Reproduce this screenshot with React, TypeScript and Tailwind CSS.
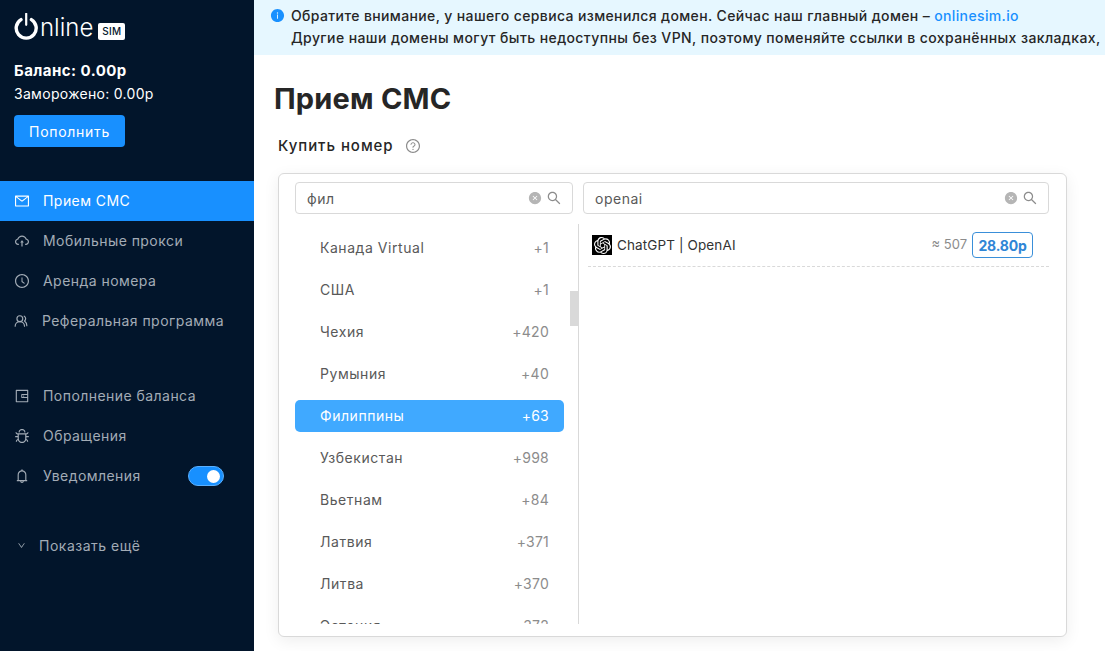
import React from "react";
import {
  AiOutlineMail,
  AiOutlineCloudUpload,
  AiOutlineClockCircle,
  AiOutlineWallet,
  AiOutlineBug,
  AiOutlineBell,
  AiOutlineDown,
  AiOutlineSearch,
  AiOutlineQuestionCircle,
  AiFillInfoCircle,
  AiFillCloseCircle,
} from "react-icons/ai";
import { SiOpenai } from "react-icons/si";
import { UsersRound } from "lucide-react";

const countries: [string, string][] = [
  ["Канада Virtual", "+1"],
  ["США", "+1"],
  ["Чехия", "+420"],
  ["Румыния", "+40"],
  ["Филиппины", "+63"],
  ["Узбекистан", "+998"],
  ["Вьетнам", "+84"],
  ["Латвия", "+371"],
  ["Литва", "+370"],
  ["Эстония", "+372"],
];

function NavItem({ icon, label, active, right }: { icon: React.ReactNode; label: string; active?: boolean; right?: React.ReactNode }) {
  return (
    <div className={`flex h-10 items-center pl-[14px] pr-[30px] text-[14px] tracking-[0.45px] whitespace-nowrap ${active ? "bg-[#1890ff] text-white" : "text-[#a3acb6]"}`}>
      <span className="flex w-[16px] justify-center text-[16px]">{icon}</span>
      <span className="mb-[2px] ml-[13px]">{label}</span>
      {right && <span className="ml-auto">{right}</span>}
    </div>
  );
}

function SearchBox({ value, className }: { value: string; className: string }) {
  return (
    <div className={`flex h-8 items-center rounded-[4px] border border-[#d9d9d9] pl-[11px] pr-[10px] text-[14px] tracking-[0.5px] text-[#595959] ${className}`}>
      <span className="flex-1">{value}</span>
      <AiFillCloseCircle className="text-[14px] text-[#b5b5b5]" />
      <AiOutlineSearch className="ml-[4px] text-[16px] text-[#8c8c8c]" />
    </div>
  );
}

export default function App() {
  return (
    <div className="flex h-[651px] w-[1105px] overflow-hidden bg-white font-['Inter','Liberation_Sans',sans-serif]">
      <aside className="flex w-[254px] shrink-0 flex-col bg-[#02152b]">
        <div className="flex h-[49px] items-end pl-[14px]">
          <svg width="27" height="28" viewBox="0 0 27 28" className="mb-[8px] shrink-0">
            <path d="M7 6.6a10 10 0 1 0 10.4 0" fill="none" stroke="#fff" strokeWidth="3.4" strokeLinecap="round" />
            <path d="M12.2 0.8v11" fill="none" stroke="#fff" strokeWidth="2.2" strokeLinecap="round" />
          </svg>
          <span className="mb-[6px] ml-[-1px] text-[24px] leading-[30px] font-light text-white">nline</span>
          <span className="mb-[9px] ml-[5px] flex h-[17px] w-[27px] items-center justify-center rounded-[2px] bg-white text-[10px] font-medium tracking-[0.3px] text-[#02152b]">SIM</span>
        </div>
        <div className="mt-[12px] pl-[14px] text-[15px] leading-5 font-bold tracking-[0.45px] text-white">Баланс: 0.00р</div>
        <div className="mt-[3px] pl-[14px] text-[14px] leading-5 tracking-[0.3px] text-white">Заморожено: 0.00р</div>
        <button className="mt-[11px] ml-[14px] h-8 w-[111px] rounded-[4px] bg-[#1890ff] text-[14px] tracking-[0.7px] text-white">Пополнить</button>
        <nav className="mt-[34px] flex flex-col">
          <NavItem active icon={<AiOutlineMail />} label="Прием СМС" />
          <NavItem icon={<AiOutlineCloudUpload />} label="Мобильные прокси" />
          <NavItem icon={<AiOutlineClockCircle />} label="Аренда номера" />
          <NavItem icon={<UsersRound size={14} />} label="Реферальная программа" />
          <div className="h-[35px]" />
          <NavItem icon={<AiOutlineWallet />} label="Пополнение баланса" />
          <NavItem icon={<AiOutlineBug />} label="Обращения" />
          <NavItem
            icon={<AiOutlineBell />}
            label="Уведомления"
            right={
              <span className="flex h-5 w-9 items-center justify-end rounded-full border border-[#5ab0ff] bg-[#1890ff] pr-[3px]">
                <span className="h-[13px] w-[13px] rounded-full bg-white" />
              </span>
            }
          />
          <div className="h-[30px]" />
          <div className="flex h-10 items-center pb-[2px] pl-[17px] text-[14px] tracking-[0.5px] text-[#a3acb6]">
            <AiOutlineDown className="text-[9px]" />
            <span className="ml-[13px]">Показать ещё</span>
          </div>
        </nav>
      </aside>

      <main className="flex min-w-0 flex-1 flex-col">
        <div className="h-[55px] overflow-hidden bg-[#e6f7ff] pt-[5px] pl-[16px] text-[14px] leading-[21px] font-medium tracking-[0.37px] whitespace-nowrap text-[#262626]">
          <div className="flex items-center">
            <AiFillInfoCircle className="shrink-0 text-[15px] text-[#1890ff]" />
            <span className="ml-[6px]">
              Обратите внимание, у нашего сервиса изменился домен. Сейчас наш главный домен – <span className="text-[#1890ff]">onlinesim.io</span>
            </span>
          </div>
          <div className="mt-[1px] pl-[21px] tracking-[0.4px]">Другие наши домены могут быть недоступны без VPN, поэтому поменяйте ссылки в сохранённых закладках,</div>
        </div>

        <h1 className="mt-[24px] ml-[20px] text-[29px] leading-[40px] font-bold tracking-[0.2px] text-[#262626]">Прием СМС</h1>
        <div className="mt-[15px] ml-[24px] flex items-center text-[15px] leading-[24px] font-medium tracking-[0.95px] text-[#262626]">
          Купить номер
          <AiOutlineQuestionCircle className="ml-[11px] text-[16px] text-[#8c8c8c]" />
        </div>

        <section className="relative mt-[15px] ml-[24px] flex h-[464px] w-[789px] flex-col rounded-[6px] border border-[#d9d9d9] bg-white shadow-[0_4px_16px_rgba(0,0,0,0.07)]">
          <div className="mt-[8px] flex gap-[10px] pr-[17px] pl-[16px]">
            <SearchBox value="фил" className="w-[278px]" />
            <SearchBox value="openai" className="flex-1" />
          </div>
          <div className="mt-[10px] flex h-[400px] min-h-0">
            <div className="relative w-[300px] shrink-0 overflow-hidden border-r border-[#d9d9d9] pr-[14px] pl-[16px]">
              <div className="flex flex-col gap-[10px] pt-[8px]">
                {countries.map(([name, code]) => (
                  <div
                    key={name}
                    className={`flex h-8 shrink-0 items-center justify-between rounded-[5px] pr-[15px] pb-[2px] pl-[25px] text-[14px] tracking-[0.55px] ${
                      name === "Филиппины" ? "bg-[#40a9ff] text-white" : "text-[#595959]"
                    }`}
                  >
                    <span>{name}</span>
                    <span className={`tracking-[0.25px] ${name === "Филиппины" ? "" : "text-[#8c8c8c]"}`}>{code}</span>
                  </div>
                ))}
              </div>
              <div className="absolute top-[67px] right-0 h-[35px] w-2 bg-[#d9d9d9]" />
            </div>
            <div className="flex-1 pr-[17px] pl-[9px]">
              <div className="flex h-[43px] items-center border-b border-dashed border-[#d9d9d9] pr-[16px] pl-[4px]">
                <span className="flex h-5 w-5 items-center justify-center bg-black text-white">
                  <SiOpenai className="text-[17px]" />
                </span>
                <span className="ml-[5px] text-[13.5px] tracking-[0.12px] text-[#333333]">ChatGPT | OpenAI</span>
                <span className="mr-[5px] ml-auto text-[13px] text-[#8c8c8c]">≈ 507</span>
                <span className="flex h-[26px] w-[61px] items-center justify-center rounded-[4px] border border-[#3a8fd9] text-[14px] font-bold tracking-[-0.2px] text-[#2f86d6]">28.80р</span>
              </div>
            </div>
          </div>
        </section>
      </main>
    </div>
  );
}
